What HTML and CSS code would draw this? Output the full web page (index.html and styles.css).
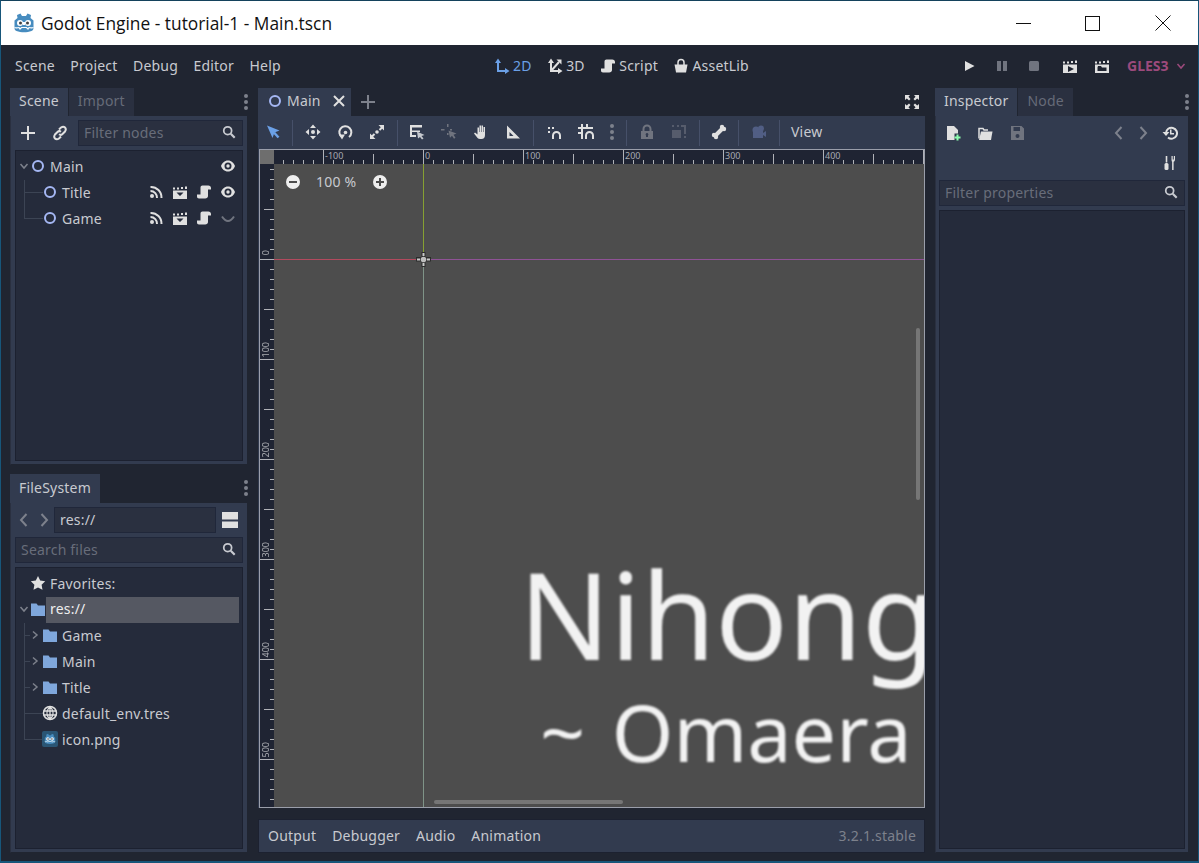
FILE: index.html
```html
<!DOCTYPE html>
<html lang="en">
<head>
    <meta charset="UTF-8">
    <title>Godot Engine - tutorial-1 - Main.tscn</title>
    <link rel="stylesheet" href="styles.css">
</head>
<body>
    <svg class="defs" xmlns="http://www.w3.org/2000/svg">
        <symbol id="i-node" viewBox="0 0 16 16"><circle cx="8" cy="8" r="5" fill="none" stroke="currentColor" stroke-width="2"/></symbol>
        <symbol id="i-eye" viewBox="0 0 16 16"><path fill="currentColor" fill-rule="evenodd" d="M8 2.500C4.500 2.500 2 5 1 8c1 3 3.500 5.500 7 5.500s6-2.500 7-5.500c-1-3-3.500-5.500-7-5.500zm0 2a3.500 3.500 0 1 1 0 7 3.500 3.500 0 0 1 0-7z"/><circle cx="8" cy="8" r="1.700" fill="currentColor"/></symbol>
        <symbol id="i-eye-off" viewBox="0 0 16 16"><path fill="none" stroke="currentColor" stroke-width="2" d="M2 6.500c2 3 4 4.500 6 4.500s4-1.500 6-4.500"/></symbol>
        <symbol id="i-signal" viewBox="0 0 16 16"><circle cx="4" cy="12" r="2" fill="currentColor"/><path fill="none" stroke="currentColor" stroke-width="2" d="M2.500 7a6.500 6.500 0 0 1 6.500 7M2.500 3a10.500 10.500 0 0 1 11 11"/></symbol>
        <symbol id="i-clap" viewBox="0 0 16 16"><path fill="currentColor" fill-rule="evenodd" d="M1 6.500h14V15H1zM4.500 8.500h7L8 12z"/><path fill="currentColor" d="M1 3.500h2v2H1zM5 3.500h2v2H5zM9 3h2v2H9zM13 2.500h2v2.500h-2z"/></symbol>
        <symbol id="i-clap-play" viewBox="0 0 16 16"><path fill="currentColor" fill-rule="evenodd" d="M1 6.500h14V15H1zM6 8v6l6-3z"/><path fill="currentColor" d="M1 3.500h2v2H1zM5 3.500h2v2H5zM9 3h2v2H9zM13 2.500h2v2.500h-2z"/></symbol>
        <symbol id="i-clap-open" viewBox="0 0 16 16"><path fill="currentColor" fill-rule="evenodd" d="M1 6.500h14V15H1zM3.500 9.500v3.500h9V9.500H8l-1-1.500H4z"/><path fill="currentColor" d="M1 3.500h2v2H1zM5 3.500h2v2H5zM9 3h2v2H9zM13 2.500h2v2.500h-2z"/></symbol>
        <symbol id="i-script" viewBox="0 0 16 16"><path fill="currentColor" d="M6.500 1.500h5.800c1.600 0 2.700 1 2.700 2.500v1.500h-3V12c0 1.600-1.200 2.500-2.800 2.500H3c-1.300 0-2-.8-2-2v-2h3.500V3.500c0-1.200.8-2 2-2z"/></symbol>
        <symbol id="i-2d" viewBox="0 0 16 16"><path fill="none" stroke="currentColor" stroke-width="2" d="M4 3v10h9"/><path fill="currentColor" d="M4 .5 7 5H1zM15.500 13 11 16v-6z"/></symbol>
        <symbol id="i-3d" viewBox="0 0 16 16"><path fill="none" stroke="currentColor" stroke-width="2" d="M4 3v10h9M4 13l8-9"/><path fill="currentColor" d="M4 .5 7 5H1zM15.500 13 11 16v-6zM14.500 1.500v5l-5-5z"/></symbol>
        <symbol id="i-bag" viewBox="0 0 16 16"><path fill="currentColor" d="M1.500 6.500h13L13 14.500H3z"/><path fill="none" stroke="currentColor" stroke-width="1.500" d="M5 7V4.500a3 3 0 0 1 6 0V7"/></symbol>
        <symbol id="i-play" viewBox="0 0 16 16"><path fill="currentColor" d="M4 3v10l9.500-5z"/></symbol>
        <symbol id="i-pause" viewBox="0 0 16 16"><path fill="currentColor" d="M3 3h4v10H3zM9 3h4v10H9z"/></symbol>
        <symbol id="i-stop" viewBox="0 0 16 16"><rect x="3" y="3" width="10" height="10" rx="1.500" fill="currentColor"/></symbol>
        <symbol id="i-plus" viewBox="0 0 16 16"><path fill="currentColor" d="M7 1h2v6h6v2H9v6H7V9H1V7h6z"/></symbol>
        <symbol id="i-close" viewBox="0 0 16 16"><path fill="none" stroke="currentColor" stroke-width="2" d="m3 3 10 10M13 3 3 13"/></symbol>
        <symbol id="i-link" viewBox="0 0 16 16"><path fill="none" stroke="currentColor" stroke-width="2" d="M7 4.500 9 2.500c1.500-1 3.200-.8 4 0s1 2.500 0 4l-2.500 2.500c-1 1-2.500 1-3.500.3M9 11.500 7 13.500c-1.500 1-3.200.8-4 0s-1-2.500 0-4L5.500 7c1-1 2.500-1 3.500-.3"/></symbol>
        <symbol id="i-search" viewBox="0 0 16 16"><circle cx="6.500" cy="6.500" r="4.500" fill="none" stroke="currentColor" stroke-width="2"/><path fill="none" stroke="currentColor" stroke-width="2.500" d="m10 10 4.500 4.500"/></symbol>
        <symbol id="i-fold" viewBox="0 0 12 12"><path fill="none" stroke="currentColor" stroke-width="1.500" d="m2.500 4 3.500 4 3.500-4"/></symbol>
        <symbol id="i-right" viewBox="0 0 12 12"><path fill="none" stroke="currentColor" stroke-width="1.500" d="m4 2.500 4 3.500-4 3.500"/></symbol>
        <symbol id="i-prev" viewBox="0 0 16 16"><path fill="none" stroke="currentColor" stroke-width="2" d="M10.500 2 5 8l5.500 6"/></symbol>
        <symbol id="i-next" viewBox="0 0 16 16"><path fill="none" stroke="currentColor" stroke-width="2" d="M5.500 2 11 8l-5.500 6"/></symbol>
        <symbol id="i-folder" viewBox="0 0 16 16"><path fill="currentColor" d="M1 2.500h5.500L8 4.500h7V15H1z"/></symbol>
        <symbol id="i-star" viewBox="0 0 16 16"><path fill="currentColor" d="m8 1 2.200 4.600 5 .7-3.600 3.500.9 5L8 12.400l-4.500 2.400.9-5L.8 6.300l5-.7z"/></symbol>
        <symbol id="i-globe" viewBox="0 0 16 16"><circle cx="8" cy="8" r="6.500" fill="none" stroke="currentColor" stroke-width="1.500"/><path fill="none" stroke="currentColor" stroke-width="1.300" d="M8 1.500v13M1.500 6h13M1.500 10h13M8 1.500c-4 4-4 9 0 13M8 1.500c4 4 4 9 0 13"/></symbol>
        <symbol id="i-move" viewBox="0 0 16 16"><circle cx="8" cy="8" r="2" fill="currentColor"/><path fill="currentColor" d="M8 .5 11 4H5zM8 15.500 5 12h6zM.5 8 4 5v6zM15.500 8 12 11V5z"/></symbol>
        <symbol id="i-rotate" viewBox="0 0 16 16"><circle cx="8.500" cy="8.500" r="1.800" fill="currentColor"/><path fill="none" stroke="currentColor" stroke-width="2" d="M5.500 13.500A6 6 0 1 1 12 13"/><path fill="currentColor" d="M2 10.500h6L5 15.500z"/></symbol>
        <symbol id="i-scale" viewBox="0 0 16 16"><circle cx="8" cy="8" r="1.800" fill="currentColor"/><path fill="currentColor" d="M9.500 1H15v5.500l-1.800-1.800-2 2-1.400-1.400 2-2zM1 15V9.500l1.800 1.800 2-2 1.400 1.400-2 2L6.500 15z"/></symbol>
        <symbol id="i-select" viewBox="0 0 16 16"><path fill="currentColor" d="m2 1.500 12.500 5-5 2-2 5.500z"/><path fill="none" stroke="currentColor" stroke-width="2.500" d="m9 8.500 4.500 5"/></symbol>
        <symbol id="i-listsel" viewBox="0 0 16 16"><path fill="currentColor" d="M1 1h12v2.500H3v3h8V8H3v3h4v2H1z"/><path fill="#c6c9cf" d="m8 7.500 7.500 3.500-3 1 2 2.500-1.500 1-2-2.500-2 1.500z"/></symbol>
        <symbol id="i-pivot" viewBox="0 0 16 16"><path fill="currentColor" d="M6 0h1.500v3H6zM6 9h1.500v2H6zM0 5h3.500v1.500H0zM9 5h2v1.500H9z"/><path fill="currentColor" d="m7.500 6.500 8 3-3 1.200 2 3-1.500 1-2-3-2 2z"/></symbol>
        <symbol id="i-hand" viewBox="0 0 16 16"><path fill="currentColor" d="M4.500 3.500h1.500V8h.5V1.500H8V8h.5V1.500h1.500V8h.5V3h1.500v8c0 2.500-1.200 4-3.500 4H7c-1.500 0-2.500-.8-3.200-2L1 9.500 2 8.500l2.500 2z"/></symbol>
        <symbol id="i-square" viewBox="0 0 16 16"><path fill="currentColor" fill-rule="evenodd" d="M2 1.500 15 14.500H2zM4.500 8v4h4z"/></symbol>
        <symbol id="i-snap" viewBox="0 0 16 16"><path fill="currentColor" d="M2 3h2v2H2zM6 3h2v2H6zM2 7h2v2H2z"/><path fill="none" stroke="currentColor" stroke-width="2" d="M7 15v-3.500a3.500 3.500 0 0 1 7 0V15"/></symbol>
        <symbol id="i-grid" viewBox="0 0 16 16"><path fill="currentColor" d="M3 0h2v15H3zM8 0h2v4H8zM0 3h15v2H0zM0 8h4v2H0z"/><path fill="none" stroke="currentColor" stroke-width="2" d="M8 15v-3.500a3.500 3.500 0 0 1 7 0V15"/></symbol>
        <symbol id="i-kebab" viewBox="0 0 16 16"><circle cx="8" cy="2" r="2" fill="currentColor"/><circle cx="8" cy="8" r="2" fill="currentColor"/><circle cx="8" cy="14" r="2" fill="currentColor"/></symbol>
        <symbol id="i-lock" viewBox="0 0 16 16"><path fill="currentColor" fill-rule="evenodd" d="M2 7h12v8H2zM8 9a1.500 1.500 0 0 0-1 2.500V13h2v-1.500A1.500 1.500 0 0 0 8 9z"/><path fill="none" stroke="currentColor" stroke-width="2" d="M4.500 7V5a3.500 3.500 0 0 1 7 0v2"/></symbol>
        <symbol id="i-group" viewBox="0 0 16 16"><path fill="currentColor" fill-rule="evenodd" d="M1 6h9v8H1zM10 1h5v9h-2V3h-3z"/><path fill="currentColor" d="M6 1h2v2H6zM1 1h2v2H1zM13 12h2v2h-2z"/></symbol>
        <symbol id="i-bone" viewBox="0 0 16 16"><circle cx="11" cy="3" r="2.200" fill="currentColor"/><circle cx="13" cy="5" r="2.200" fill="currentColor"/><circle cx="3" cy="11" r="2.200" fill="currentColor"/><circle cx="5" cy="13" r="2.200" fill="currentColor"/><path fill="none" stroke="currentColor" stroke-width="4" d="M4.500 11.500l7-7"/></symbol>
        <symbol id="i-camera" viewBox="0 0 16 16"><circle cx="5" cy="6" r="3.500" fill="currentColor"/><circle cx="10" cy="4.500" r="3" fill="currentColor"/><path fill="currentColor" d="M2 7h10v7H2zM12 9l3-2v6l-3-2z"/></symbol>
        <symbol id="i-full" viewBox="0 0 16 16"><path fill="currentColor" d="M1 1h5L4.500 2.800 6.500 5 5 6.500 2.800 4.500 1 6zM15 1v5l-1.800-1.500-2.200 2L9.500 5l2-2.200L10 1zM1 15v-5l1.800 1.500 2.200-2L6.500 11l-2 2.200L6 15zM15 15h-5l1.500-1.800-2-2.200 1.500-1.500 2.200 2L15 10z"/></symbol>
        <symbol id="i-newres" viewBox="0 0 16 16"><path fill="currentColor" d="M2 1h7l4 4v3.500H9.500V15H2z"/><path fill="#8effb0" d="M11.500 9.500h2v2h2v2h-2v2h-2v-2h-2v-2h2z"/></symbol>
        <symbol id="i-open" viewBox="0 0 16 16"><path fill="none" stroke="currentColor" stroke-width="1.500" d="M2 13.500V3.500h4l1 1.500h4"/><path fill="currentColor" d="M2 15 4 6.500h11.500L14 15z"/></symbol>
        <symbol id="i-save" viewBox="0 0 16 16"><path fill="currentColor" fill-rule="evenodd" d="M2 1h10.500L15 3.500V15H2zM4.500 2v4h6.500V2zM8.500 9a2 2 0 1 0 0 4 2 2 0 0 0 0-4z"/></symbol>
        <symbol id="i-history" viewBox="0 0 16 16"><path fill="none" stroke="currentColor" stroke-width="2" d="M4 8a5.500 5.500 0 1 1 2 4.500"/><path fill="currentColor" d="M.5 7h7L4 11zM8 4.500h1.500V8H12v1.500H8z"/></symbol>
        <symbol id="i-tools" viewBox="0 0 16 16"><path fill="currentColor" d="M3.700 1h1.600v6.500h-1.600z"/><rect x="2.500" y="8" width="4" height="7" rx="1.500" fill="currentColor"/><path fill="currentColor" d="M9.500 1h1.200v3.500h1.100V1H13v3.500c0 1.200-.6 2-1.400 2.300V15h-1.500V6.800C9.800 6.500 9.500 5.700 9.500 4.500z"/></symbol>
        <symbol id="i-rows" viewBox="0 0 16 16"><path fill="currentColor" d="M0 0h16v7.500H0zM0 9.500h16V16H0z"/></symbol>
        <symbol id="i-minus-c" viewBox="0 0 16 16"><path fill="currentColor" fill-rule="evenodd" d="M8 1a7 7 0 1 1 0 14A7 7 0 0 1 8 1zM4 7v2h8V7z"/></symbol>
        <symbol id="i-plus-c" viewBox="0 0 16 16"><path fill="currentColor" fill-rule="evenodd" d="M8 1a7 7 0 1 1 0 14A7 7 0 0 1 8 1zM7 4v3H4v2h3v3h2V9h3V7H9V4z"/></symbol>
        <symbol id="i-godot" viewBox="0 0 22 22">
            <path fill="#478cbf" d="M7.500 1.500 9 4h4l1.500-2.500L18 3l-.5 3 3 2.500V16c0 1.500-.7 2.500-2 3-4.500 1.800-10.500 1.800-15 0-1.300-.5-2-1.500-2-3V8.500l3-2.500L4 3z"/>
            <circle cx="7" cy="11" r="3" fill="#fff"/><circle cx="15" cy="11" r="3" fill="#fff"/>
            <circle cx="7.500" cy="11" r="1.500" fill="#414042"/><circle cx="14.500" cy="11" r="1.500" fill="#414042"/>
            <path fill="#fff" d="M10 10h2v3h-2z"/>
            <path fill="none" stroke="#fff" stroke-width="1.200" d="M1.500 15.500c2 1 3 0 4.500 0l1 1.500 1.500-1.500h5l1.500 1.500 1-1.500c1.500 0 2.500 1 4.500 0"/>
        </symbol>
    </svg>

    <div class="window">
        <header class="titlebar">
            <svg class="title-logo"><use href="#i-godot"/></svg>
            <span class="title-text">Godot Engine - tutorial-1 - Main.tscn</span>
            <div class="win-buttons">
                <span class="win-btn"><span class="win-min"></span></span>
                <span class="win-btn"><span class="win-max"></span></span>
                <span class="win-btn"><svg class="win-x" viewBox="0 0 16 16"><path d="M.5.500l15 15M15.500.500l-15 15" stroke="#111" fill="none"/></svg></span>
            </div>
        </header>

        <nav class="menubar">
            <div class="menu-left">
                <span>Scene</span><span>Project</span><span>Debug</span><span>Editor</span><span>Help</span>
            </div>
            <div class="menu-center">
                <span class="mode active"><svg class="ico"><use href="#i-2d"/></svg>2D</span>
                <span class="mode"><svg class="ico"><use href="#i-3d"/></svg>3D</span>
                <span class="mode"><svg class="ico"><use href="#i-script"/></svg>Script</span>
                <span class="mode"><svg class="ico"><use href="#i-bag"/></svg>AssetLib</span>
            </div>
            <div class="menu-right">
                <svg class="ico"><use href="#i-play"/></svg>
                <svg class="ico dim run-pause"><use href="#i-pause"/></svg>
                <svg class="ico dim"><use href="#i-stop"/></svg>
                <svg class="ico run-scene"><use href="#i-clap-play"/></svg>
                <svg class="ico"><use href="#i-clap-open"/></svg>
                <span class="gles">GLES3<svg class="ico-s"><use href="#i-fold"/></svg></span>
            </div>
        </nav>

        <main class="docks">
            <div class="col-left">
                <section class="dock dock-scene">
                    <div class="tabs">
                        <span class="tab active">Scene</span>
                        <span class="tab">Import</span>
                        <svg class="kebab"><use href="#i-kebab"/></svg>
                    </div>
                    <div class="panel">
                        <div class="scene-tools">
                            <svg class="ico"><use href="#i-plus"/></svg>
                            <svg class="ico"><use href="#i-link"/></svg>
                            <label class="filter filter-grow">
                                <input type="text" placeholder="Filter nodes">
                                <svg class="ico"><use href="#i-search"/></svg>
                            </label>
                        </div>
                        <div class="tree">
                            <div class="row">
                                <svg class="chev"><use href="#i-fold"/></svg>
                                <svg class="ico node"><use href="#i-node"/></svg>
                                <span class="row-name">Main</span>
                                <svg class="ico"><use href="#i-eye"/></svg>
                            </div>
                            <div class="row child branch">
                                <svg class="ico node"><use href="#i-node"/></svg>
                                <span class="row-name">Title</span>
                                <span class="row-icons">
                                    <svg class="ico"><use href="#i-signal"/></svg>
                                    <svg class="ico"><use href="#i-clap"/></svg>
                                    <svg class="ico"><use href="#i-script"/></svg>
                                    <svg class="ico"><use href="#i-eye"/></svg>
                                </span>
                            </div>
                            <div class="row child branch last">
                                <svg class="ico node"><use href="#i-node"/></svg>
                                <span class="row-name">Game</span>
                                <span class="row-icons">
                                    <svg class="ico"><use href="#i-signal"/></svg>
                                    <svg class="ico"><use href="#i-clap"/></svg>
                                    <svg class="ico"><use href="#i-script"/></svg>
                                    <svg class="ico dim"><use href="#i-eye-off"/></svg>
                                </span>
                            </div>
                        </div>
                    </div>
                </section>

                <section class="dock dock-files">
                    <div class="tabs">
                        <span class="tab active">FileSystem</span>
                        <svg class="kebab"><use href="#i-kebab"/></svg>
                    </div>
                    <div class="panel">
                        <div class="path-row">
                            <svg class="ico muted"><use href="#i-prev"/></svg>
                            <svg class="ico muted"><use href="#i-next"/></svg>
                            <label class="filter path-box"><input type="text" value="res://"></label>
                            <svg class="ico"><use href="#i-rows"/></svg>
                        </div>
                        <label class="filter search-box">
                            <input type="text" placeholder="Search files">
                            <svg class="ico"><use href="#i-search"/></svg>
                        </label>
                        <div class="tree">
                            <div class="row fav">
                                <svg class="ico"><use href="#i-star"/></svg>
                                <span class="row-name">Favorites:</span>
                            </div>
                            <div class="row">
                                <svg class="chev"><use href="#i-fold"/></svg>
                                <svg class="ico folder"><use href="#i-folder"/></svg>
                                <span class="row-selected">res://</span>
                            </div>
                            <div class="row child dir branch">
                                <svg class="chev-r"><use href="#i-right"/></svg>
                                <svg class="ico folder"><use href="#i-folder"/></svg>
                                <span class="row-name">Game</span>
                            </div>
                            <div class="row child dir branch">
                                <svg class="chev-r"><use href="#i-right"/></svg>
                                <svg class="ico folder"><use href="#i-folder"/></svg>
                                <span class="row-name">Main</span>
                            </div>
                            <div class="row child dir branch">
                                <svg class="chev-r"><use href="#i-right"/></svg>
                                <svg class="ico folder"><use href="#i-folder"/></svg>
                                <span class="row-name">Title</span>
                            </div>
                            <div class="row child branch">
                                <svg class="ico"><use href="#i-globe"/></svg>
                                <span class="row-name">default_env.tres</span>
                            </div>
                            <div class="row child branch last">
                                <span class="png-icon"><svg class="png-logo"><use href="#i-godot"/></svg></span>
                                <span class="row-name">icon.png</span>
                            </div>
                        </div>
                    </div>
                </section>
            </div>

            <div class="col-center">
                <div class="tabs scene-tabs">
                    <span class="tab active scene-tab">
                        <svg class="ico node"><use href="#i-node"/></svg>Main
                        <svg class="ico tab-close"><use href="#i-close"/></svg>
                    </span>
                    <svg class="ico muted tab-add"><use href="#i-plus"/></svg>
                    <svg class="ico tab-full"><use href="#i-full"/></svg>
                </div>
                <div class="editor">
                    <div class="toolbar">
                        <span class="tool first blue"><svg class="ico"><use href="#i-select"/></svg></span>
                        <i class="sep"></i>
                        <span class="tool"><svg class="ico"><use href="#i-move"/></svg></span>
                        <span class="tool"><svg class="ico"><use href="#i-rotate"/></svg></span>
                        <span class="tool"><svg class="ico"><use href="#i-scale"/></svg></span>
                        <i class="sep tight"></i>
                        <span class="tool"><svg class="ico"><use href="#i-listsel"/></svg></span>
                        <span class="tool dim"><svg class="ico"><use href="#i-pivot"/></svg></span>
                        <span class="tool"><svg class="ico"><use href="#i-hand"/></svg></span>
                        <span class="tool"><svg class="ico"><use href="#i-square"/></svg></span>
                        <i class="sep"></i>
                        <span class="tool"><svg class="ico"><use href="#i-snap"/></svg></span>
                        <span class="tool"><svg class="ico"><use href="#i-grid"/></svg></span>
                        <span class="tool narrow muted"><svg class="ico"><use href="#i-kebab"/></svg></span>
                        <i class="sep"></i>
                        <span class="tool dim"><svg class="ico"><use href="#i-lock"/></svg></span>
                        <span class="tool faint"><svg class="ico"><use href="#i-group"/></svg></span>
                        <i class="sep"></i>
                        <span class="tool first"><svg class="ico"><use href="#i-bone"/></svg></span>
                        <i class="sep"></i>
                        <span class="tool cam"><svg class="ico"><use href="#i-camera"/></svg></span>
                        <i class="sep"></i>
                        <span class="tool-text">View</span>
                    </div>

                    <div class="viewport">
                        <div class="corner"></div>
                        <div class="ruler-top">
                            <span class="tick-x tx-1">-100</span>
                            <span class="tick-x tx-2">0</span>
                            <span class="tick-x tx-3">100</span>
                            <span class="tick-x tx-4">200</span>
                            <span class="tick-x tx-5">300</span>
                            <span class="tick-x tx-6">400</span>
                        </div>
                        <div class="ruler-left">
                            <span class="tick-y ty-1">0</span>
                            <span class="tick-y ty-2">100</span>
                            <span class="tick-y ty-3">200</span>
                            <span class="tick-y ty-4">300</span>
                            <span class="tick-y ty-5">400</span>
                            <span class="tick-y ty-6">500</span>
                        </div>
                        <div class="canvas">
                            <div class="guide-v"></div>
                            <div class="guide-h"></div>
                            <svg class="origin" viewBox="0 0 15 15">
                                <path fill="#2c2c2c" d="M5.500 0h4v5h5.500v4.500H9.500V15h-4V9.500H0V5h5.500z"/>
                                <path fill="#c9c9c9" d="M6.500 1h2v3h-2zM6.500 11h2v3h-2zM1 6.500h3v2H1zM11 6.500h3v2h-3z"/>
                                <circle cx="7.500" cy="7.500" r="2.800" fill="#bdbdbd"/>
                            </svg>
                            <div class="big-text big-1">Nihong</div>
                            <div class="big-text big-2">~ Omaera</div>
                            <div class="zoom-box">
                                <svg class="ico zoom-ico"><use href="#i-minus-c"/></svg>
                                <span class="zoom-val">100 %</span>
                                <svg class="ico zoom-ico"><use href="#i-plus-c"/></svg>
                            </div>
                            <div class="scroll-v"></div>
                            <div class="scroll-h"></div>
                        </div>
                    </div>
                </div>
                <footer class="bottom-bar">
                    <span>Output</span><span>Debugger</span><span>Audio</span><span>Animation</span>
                    <span class="version">3.2.1.stable</span>
                </footer>
            </div>

            <section class="col-right">
                <div class="tabs">
                    <span class="tab active">Inspector</span>
                    <span class="tab">Node</span>
                    <svg class="kebab"><use href="#i-kebab"/></svg>
                </div>
                <div class="panel">
                    <div class="insp-row">
                        <svg class="ico"><use href="#i-newres"/></svg>
                        <svg class="ico"><use href="#i-open"/></svg>
                        <svg class="ico dim"><use href="#i-save"/></svg>
                        <span class="insp-space"></span>
                        <svg class="ico muted"><use href="#i-prev"/></svg>
                        <svg class="ico muted"><use href="#i-next"/></svg>
                        <svg class="ico"><use href="#i-history"/></svg>
                    </div>
                    <div class="insp-row second">
                        <svg class="ico"><use href="#i-tools"/></svg>
                    </div>
                    <label class="filter search-box">
                        <input type="text" placeholder="Filter properties">
                        <svg class="ico"><use href="#i-search"/></svg>
                    </label>
                    <div class="tree insp-tree"></div>
                </div>
            </section>
        </main>
    </div>
</body>
</html>
```

FILE: styles.css
```css
* {
    box-sizing: border-box;
}

html, body {
    margin: 0;
    height: 100%;
    overflow: hidden;
}

body {
    font-family: "Noto Sans", sans-serif;
    font-size: 14px;
    letter-spacing: 0.2px;
    color: #c8cad0;
    background-color: #202531;
}

.defs {
    display: none;
}

.ico {
    width: 16px;
    height: 16px;
    flex: none;
    color: #e0e0e0;
}

.ico.dim, .dim .ico {
    color: #70747f;
}

.ico.muted, .muted .ico {
    color: #7d818c;
}

.window {
    height: 863px;
    display: flex;
    flex-direction: column;
    border: 1px solid #17567a;
    border-top-color: #14425c;
    border-bottom-width: 2px;
}

/* title bar */
.titlebar {
    height: 44px;
    flex: none;
    display: flex;
    align-items: center;
    padding-left: 12px;
    background-color: #fff;
    color: #111;
}

.title-logo {
    width: 22px;
    height: 22px;
    margin-right: 6px;
}

.title-text {
    font-family: "Open Sans", sans-serif;
    font-size: 17.35px;
    letter-spacing: 0;
}

.win-buttons {
    margin-left: auto;
    display: flex;
}

.win-btn {
    width: 70px;
    height: 44px;
    display: flex;
    align-items: center;
    justify-content: center;
}

.win-min {
    width: 15px;
    height: 1px;
    background-color: #111;
}

.win-max {
    width: 15px;
    height: 15px;
    margin-right: 2px;
    border: 1px solid #111;
}

.win-x {
    width: 16px;
    height: 16px;
}

/* menu */
.menubar {
    height: 43px;
    flex: none;
    display: flex;
    align-items: center;
    padding-left: 14px;
    padding-bottom: 2px;
}

.menu-left {
    width: 479px;
    display: flex;
    gap: 15.5px;
}

.menu-center {
    width: 467px;
    display: flex;
    gap: 15.5px;
}

.mode {
    display: flex;
    align-items: center;
    gap: 3px;
}

.mode.active, .mode.active .ico {
    color: #6ba0e6;
}

.menu-right {
    display: flex;
    align-items: center;
    gap: 16px;
}

.run-pause {
    margin-left: 1px;
}

.run-scene {
    margin-left: 4px;
}

.gles {
    display: flex;
    align-items: center;
    gap: 6px;
    margin-left: 1px;
    color: #9c4a7c;
    font-weight: 700;
    letter-spacing: 0;
}

.ico-s {
    width: 12px;
    height: 12px;
}

/* docks */
.docks {
    flex: 1;
    min-height: 0;
    display: flex;
    gap: 10px;
    padding: 0 9px 8px;
}

.col-left {
    width: 238px;
    display: flex;
    flex-direction: column;
    gap: 9px;
}

.col-center {
    width: 667px;
    display: flex;
    flex-direction: column;
}

.col-right {
    width: 254px;
    display: flex;
    flex-direction: column;
}

.dock-scene {
    height: 377px;
    display: flex;
    flex-direction: column;
}

.dock-files {
    flex: 1;
    min-height: 0;
    display: flex;
    flex-direction: column;
}

.tabs {
    height: 28px;
    flex: none;
    display: flex;
    align-items: stretch;
    gap: 1px;
    position: relative;
}

.tab {
    display: flex;
    align-items: center;
    padding: 0 9px 3px;
    background-color: #2a3040;
    color: #666b78;
}

.tab.active {
    background-color: #323b4f;
    color: #c8cad0;
}

.dock-files .tabs {
    height: 29px;
}

.kebab {
    position: absolute;
    right: -6px;
    top: 6px;
    width: 16px;
    height: 16px;
    color: #7d818c;
}

.panel {
    flex: 1;
    min-height: 0;
    display: flex;
    flex-direction: column;
    padding: 4px 4px 3px;
    background-color: #323b4f;
    border: 1px solid #202531;
    border-top: 0;
    border-left-color: #2a3040;
}

.tree {
    flex: 1;
    min-height: 0;
    margin-top: 4px;
    padding-top: 3px;
    background-color: #252b3b;
    border: 1px solid #1c2130;
}

.scene-tools {
    display: flex;
    align-items: center;
    height: 26px;
    padding-left: 5px;
    gap: 16px;
}

.filter {
    display: flex;
    align-items: center;
    height: 26px;
    padding: 0 6px 2px 5px;
    background-color: #2a3040;
    border: 1px solid #20273a;
}

.filter input {
    flex: 1;
    min-width: 0;
    height: 100%;
    padding: 0;
    border: 0;
    outline: 0;
    background: none;
    color: #c8cad0;
    font: inherit;
    letter-spacing: inherit;
}

.filter input::placeholder {
    color: #686d7a;
    opacity: 1;
}

.filter .ico {
    width: 14px;
    height: 14px;
    color: #c8cad0;
}

.filter-grow {
    flex: 1;
    min-width: 0;
    margin-left: -6px;
}

.row {
    height: 26px;
    display: flex;
    align-items: center;
    padding: 0 6px 2px 0;
}

.chev {
    width: 16px;
    height: 12px;
    margin-right: -2px;
    color: #7d818c;
}

.node {
    color: #a5b7f3;
}

.row-name {
    flex: 1;
    margin-left: 4px;
}

.child {
    padding-left: 26px;
}

.branch {
    background-image:
        linear-gradient(#3c4454, #3c4454),
        linear-gradient(#3c4454, #3c4454);
    background-repeat: no-repeat;
    background-position: 8px 0, 8px 12px;
    background-size: 1px 26px, 19px 1px;
}

.branch.last {
    background-size: 1px 13px, 19px 1px;
}

.branch.dir {
    background-size: 1px 26px, 6px 1px;
}

.row-icons {
    display: flex;
    gap: 8px;
}

/* file system */
.path-row {
    height: 26px;
    display: flex;
    align-items: center;
    padding-left: 1px;
    gap: 4px;
}

.path-row .ico:last-child {
    margin-left: 2px;
}

.path-box {
    width: 162px;
    margin-left: -2px;
}

.search-box {
    margin-top: 4px;
    flex: none;
}

.fav {
    padding-left: 14px;
}

.folder {
    color: #7fa7dc;
}

.row-selected {
    flex: 1;
    height: 26px;
    line-height: 24px;
    margin: 0 -3px -2px 0;
    padding-left: 4px;
    background-color: #555862;
    color: #eee;
}

.dir {
    padding-left: 13px;
}

.chev-r {
    width: 12px;
    height: 12px;
    margin-right: 1px;
    color: #7d818c;
}

.png-icon {
    width: 16px;
    height: 16px;
    display: flex;
    align-items: center;
    justify-content: center;
    background-color: #2a5574;
    border-radius: 2px;
}

.png-logo {
    width: 12px;
    height: 12px;
}

/* scene tabs */
.scene-tab {
    padding: 0 4px 3px 9px;
    gap: 4px;
    width: 93px;
}

.tab-close {
    margin-left: auto;
}

.tab-add {
    align-self: center;
    margin-left: 8px;
}

.tab-full {
    align-self: center;
    margin-left: auto;
    margin-right: 5px;
}

/* toolbar and viewport */
.editor {
    flex: 1;
    min-height: 0;
    background-color: #323b4f;
    display: flex;
    flex-direction: column;
}

.toolbar {
    height: 33px;
    flex: none;
    display: flex;
    align-items: center;
    padding-bottom: 2px;
}

.tool {
    width: 32px;
    display: flex;
    justify-content: center;
}

.tool.first {
    width: 30px;
}

.tool.narrow {
    width: 20px;
}

.blue .ico {
    color: #6ba0e6;
}

.dim .ico {
    color: #70747f;
}

.faint .ico {
    color: #565c6c;
}

.cam .ico {
    color: #515e84;
}

.sep {
    width: 1px;
    height: 26px;
    margin: 2px 4px 0;
    background-color: #465069;
}

.sep.tight {
    margin-right: 3px;
}

.tool-text {
    margin-left: 7px;
}

.viewport {
    height: 659px;
    flex: none;
    margin-left: 1px;
    display: grid;
    grid-template-columns: 14px 1fr;
    grid-template-rows: 14px 1fr;
    border: 1px solid #9a9eaa;
}

.corner {
    background-color: #6e6e6e;
}

.ruler-top, .ruler-left {
    position: relative;
    background-color: #1f2433;
    background-repeat: repeat-x;
}

.ruler-top {
    background-image:
        linear-gradient(90deg, #b0b2b8 1px, transparent 1px),
        linear-gradient(90deg, #b0b2b8 1px, transparent 1px),
        linear-gradient(90deg, #b0b2b8 1px, transparent 1px);
    background-size: 100px 14px, 100px 10px, 10px 4px;
    background-position: 49px 0, 99px 100%, 9px 100%;
}

.ruler-left {
    background-repeat: repeat-y;
    background-image:
        linear-gradient(#b0b2b8 1px, transparent 1px),
        linear-gradient(#b0b2b8 1px, transparent 1px),
        linear-gradient(#b0b2b8 1px, transparent 1px);
    background-size: 14px 100px, 10px 100px, 4px 10px;
    background-position: 0 95px, 100% 45px, 100% 5px;
}

.tick-x, .tick-y {
    position: absolute;
    font-size: 9px;
    line-height: 10px;
    letter-spacing: 0;
    color: #a8aab0;
}

.tick-x {
    top: 1px;
}

.tx-1 { left: 51px; }
.tx-2 { left: 151px; }
.tx-3 { left: 251px; }
.tx-4 { left: 351px; }
.tx-5 { left: 451px; }
.tx-6 { left: 551px; }

.tick-y {
    left: 1px;
    writing-mode: vertical-rl;
    transform: rotate(180deg);
}

.ty-1 { top: 86px; }
.ty-2 { top: 178px; }
.ty-3 { top: 278px; }
.ty-4 { top: 378px; }
.ty-5 { top: 478px; }
.ty-6 { top: 578px; }

.canvas {
    position: relative;
    overflow: hidden;
    background-color: #4d4d4d;
}

.guide-v {
    position: absolute;
    left: 149px;
    top: 0;
    bottom: 0;
    width: 1px;
    background: linear-gradient(#86a032 95px, #7f9488 95px);
}

.guide-h {
    position: absolute;
    left: 0;
    right: 0;
    top: 95px;
    height: 1px;
    background: linear-gradient(90deg, #b24a5e 149px, #8f5296 149px);
}

.origin {
    position: absolute;
    left: 142px;
    top: 88px;
    width: 15px;
    height: 15px;
}

.big-text {
    position: absolute;
    color: #f2f2f2;
    filter: blur(0.8px);
    white-space: nowrap;
    line-height: 1;
    letter-spacing: 0;
}

.big-1 {
    left: 245px;
    top: 390px;
    font-size: 120px;
}

.big-2 {
    left: 266px;
    top: 528px;
    font-size: 79px;
    word-spacing: 6px;
}

.zoom-box {
    position: absolute;
    left: 11px;
    top: 8px;
    display: flex;
    align-items: center;
    gap: 15px;
}

.zoom-ico {
    color: #eee;
}

.zoom-val {
    margin-right: 1px;
    color: #c8cad0;
}

.scroll-v {
    position: absolute;
    left: 642px;
    top: 164px;
    width: 4px;
    height: 172px;
    background-color: #767676;
    border-radius: 2px;
}

.scroll-h {
    position: absolute;
    left: 160px;
    top: 636px;
    width: 189px;
    height: 4px;
    background-color: #767676;
    border-radius: 2px;
}

.bottom-bar {
    height: 34px;
    flex: none;
    margin-top: 11px;
    display: flex;
    align-items: center;
    gap: 16px;
    padding: 0 8px 2px 9px;
    background-color: #323b4f;
    border: 1px solid #1c2130;
}

.version {
    margin-left: auto;
    color: #7d818c;
}

/* inspector */
.col-right .panel {
    padding: 4px 3px 3px;
}

.insp-row {
    height: 26px;
    flex: none;
    display: flex;
    align-items: center;
    gap: 16px;
    padding: 0 7px 0 6px;
}

.insp-row.second {
    justify-content: flex-end;
    height: 30px;
    padding-top: 4px;
}

.insp-space {
    flex: 1;
}

.insp-row .muted {
    margin-right: -8px;
}

.insp-row .muted + .ico:not(.muted) {
    margin-left: 3px;
}
```
